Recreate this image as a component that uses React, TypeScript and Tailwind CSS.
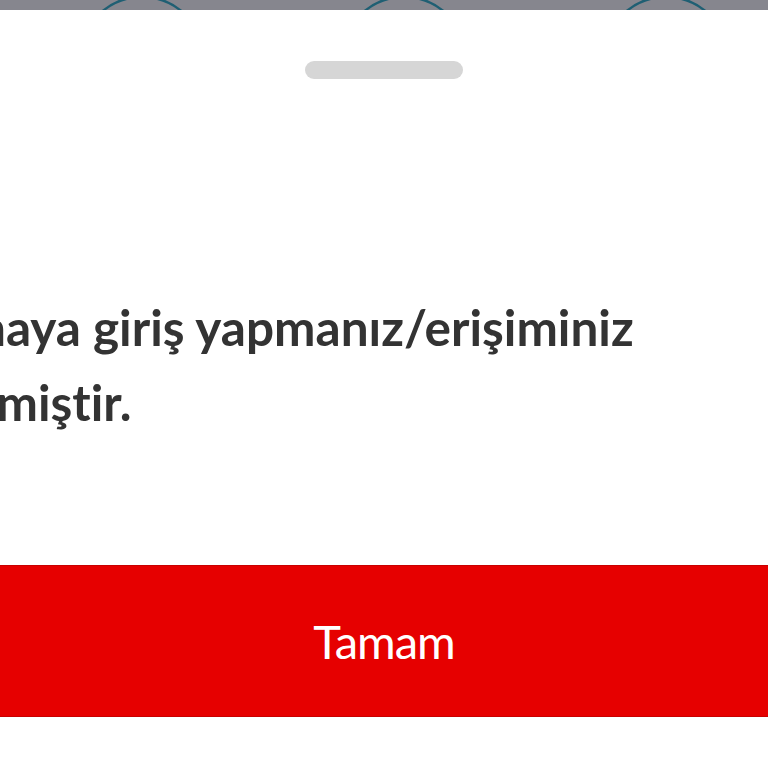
import React from 'react';

function BackdropArcs() {
  const centers = [142, 404, 666];
  return (
    <svg className="absolute inset-0" width="768" height="10" viewBox="0 0 768 10">
      {centers.map((cx) => (
        <circle key={cx} cx={cx} cy={59} r={62} fill="none" stroke="#1f5f73" strokeWidth={2.5} />
      ))}
    </svg>
  );
}

export default function App() {
  return (
    <div className="w-[768px] h-[768px] overflow-hidden bg-white flex flex-col" style={{ fontFamily: 'Lato, "Open Sans", sans-serif' }}>
      <div className="relative h-[10px] shrink-0 bg-[#86868e] overflow-hidden">
        <BackdropArcs />
      </div>

      <div className="flex justify-center pt-[51px] shrink-0">
        <div className="w-[158px] h-[18px] rounded-full bg-[#d6d6d6]" />
      </div>

      <div className="mt-[211px] h-[150px] shrink-0 overflow-hidden">
        <p className="ml-[-189px] whitespace-nowrap text-[49.5px] leading-[75px] font-bold text-[#333333] [font-variant-ligatures:none]">
          Uygulamaya giriş yapmanız/erişiminiz
          <br />
          engellenmiştir.
        </p>
      </div>

      <div className="mt-auto mb-[51px] h-[152px] shrink-0 bg-[#e60000] border-y border-[#c80000] flex items-center justify-center">
        <span className="text-white text-[47px] font-normal tracking-[-1px]">Tamam</span>
      </div>
    </div>
  );
}
